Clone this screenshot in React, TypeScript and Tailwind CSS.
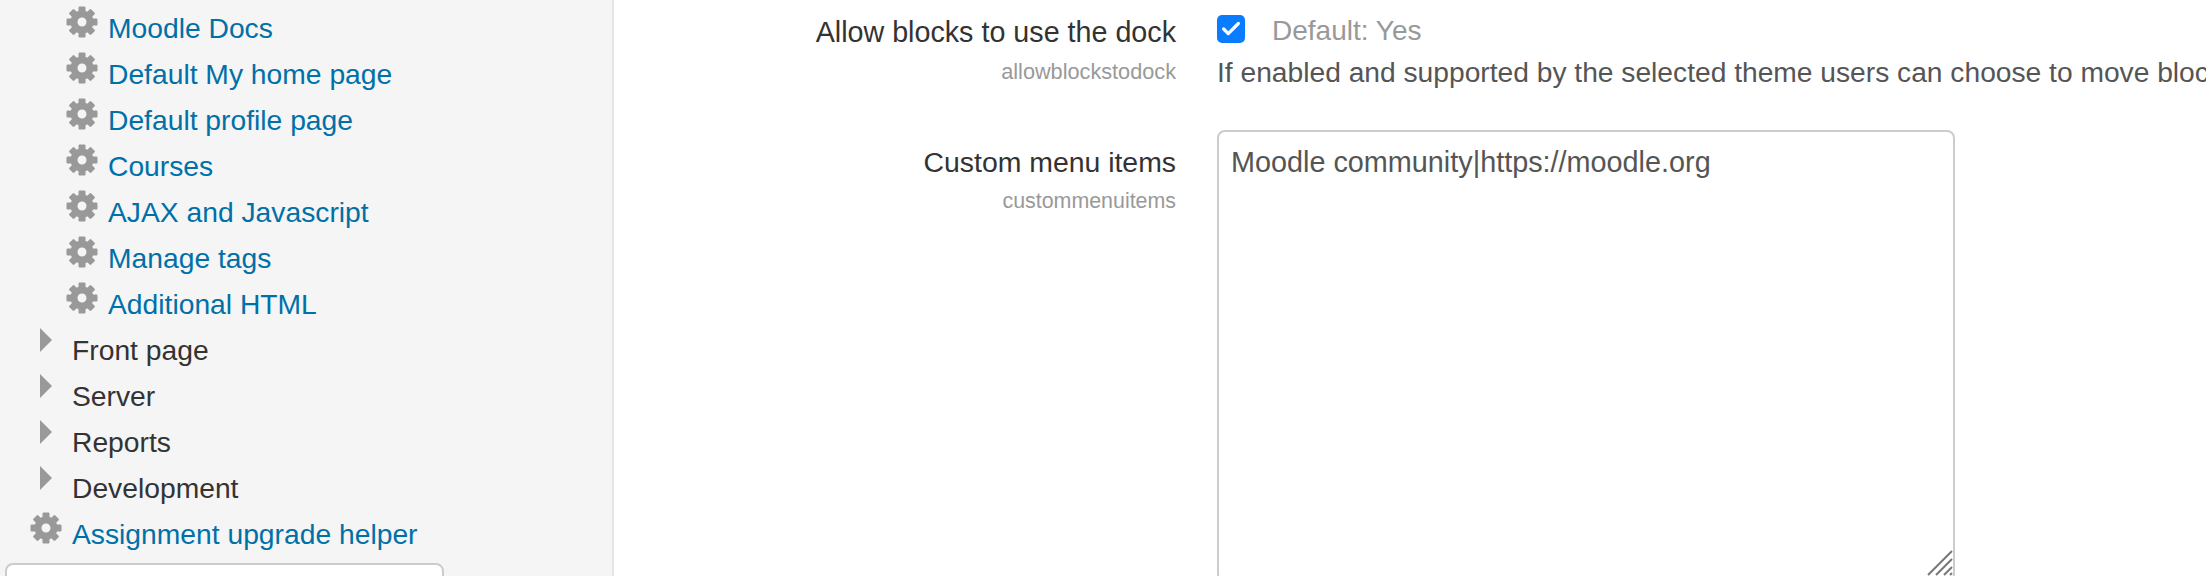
import { Check } from 'lucide-react'

const adminLinks = [
  'Moodle Docs',
  'Default My home page',
  'Default profile page',
  'Courses',
  'AJAX and Javascript',
  'Manage tags',
  'Additional HTML',
]

const sections = ['Front page', 'Server', 'Reports', 'Development']

function Gear() {
  return (
    <svg viewBox="0 0 32 32" className="h-8 w-8 shrink-0 text-[#999]" fill="currentColor">
      <circle cx="16" cy="16" r="8" fill="none" stroke="currentColor" strokeWidth="7" />
      {[0, 45, 90, 135, 180, 225, 270, 315].map((angle) => (
        <rect key={angle} x="12.5" y="0.5" width="7" height="8" rx="1.2" transform={`rotate(${angle} 16 16)`} />
      ))}
    </svg>
  )
}

function Caret() {
  return (
    <svg viewBox="0 0 12 24" className="h-6 w-3 shrink-0 text-[#999]" fill="currentColor">
      <path d="M0 0 L12 12 L0 24 Z" />
    </svg>
  )
}

function ResizeHandle() {
  return (
    <svg viewBox="0 0 26 26" className="absolute right-[2px] bottom-[6px] h-[26px] w-[26px] text-[#777]" stroke="currentColor" strokeWidth="2">
      <path d="M1 25 L25 1 M9 25 L25 9 M17 25 L25 17 M23 25 L25 23" />
    </svg>
  )
}

function Sidebar() {
  return (
    <aside className="h-full w-[614px] shrink-0 overflow-hidden border-r-2 border-[#e5e5e5] bg-[#f5f5f5] pt-[6px] text-[28.25px]">
      {adminLinks.map((label) => (
        <div key={label} className="flex h-[46px] pl-[66px]">
          <Gear />
          <a className="ml-[10px] mt-[1px] text-[#0070a8]">{label}</a>
        </div>
      ))}
      {sections.map((label) => (
        <div key={label} className="flex h-[46px] pl-[40px]">
          <Caret />
          <span className="ml-[20px] mt-[1px] text-[#333]">{label}</span>
        </div>
      ))}
      <div className="flex h-[46px] pl-[30px]">
        <Gear />
        <a className="ml-[10px] mt-[1px] text-[#0070a8]">Assignment upgrade helper</a>
      </div>
      <div className="ml-[5px] mt-[5px] h-[40px] w-[439px] rounded-lg border-2 border-[#ccc] bg-white" />
    </aside>
  )
}

export default function App() {
  return (
    <div className="flex h-[576px] w-[2206px] overflow-hidden bg-white font-['Liberation_Sans',Arial,sans-serif] text-[28px] leading-[42px]">
      <Sidebar />
      <main className="min-w-0 flex-1 overflow-hidden pt-[11px]">
        <div className="flex h-[119px]">
          <div className="w-[562px] shrink-0 text-right">
            <div className="text-[28.7px] text-[#333]">Allow blocks to use the dock</div>
            <div className="mt-[4px] text-[21.7px] leading-[30px] text-[#999]">allowblockstodock</div>
          </div>
          <div className="ml-[41px] min-w-0">
            <div className="flex items-start">
              <span className="mt-[4px] flex h-7 w-7 items-center justify-center rounded-[5px] bg-[#0a7cff] text-white">
                <Check size={22} strokeWidth={3.5} />
              </span>
              <span className="ml-[27px] -mt-[1px] text-[#999]">Default: Yes</span>
            </div>
            <div className="-mt-[1px] whitespace-nowrap text-[28.2px] text-[#555]">
              If enabled and supported by the selected theme users can choose to move blocks to a special dock.
            </div>
          </div>
        </div>
        <div className="flex">
          <div className="w-[562px] shrink-0 pt-[11px] text-right">
            <div className="text-[28.4px] text-[#333]">Custom menu items</div>
            <div className="mt-[3px] text-[21.4px] leading-[30px] text-[#999]">custommenuitems</div>
          </div>
          <div className="relative ml-[41px] h-[452px] w-[738px]">
            <textarea
              readOnly
              defaultValue="Moodle community|https://moodle.org"
              className="h-full w-full resize-none rounded-lg border-2 border-[#ccc] bg-white px-3 py-[9px] text-[28.8px] text-[#555] outline-none"
            />
            <ResizeHandle />
          </div>
        </div>
      </main>
    </div>
  )
}
